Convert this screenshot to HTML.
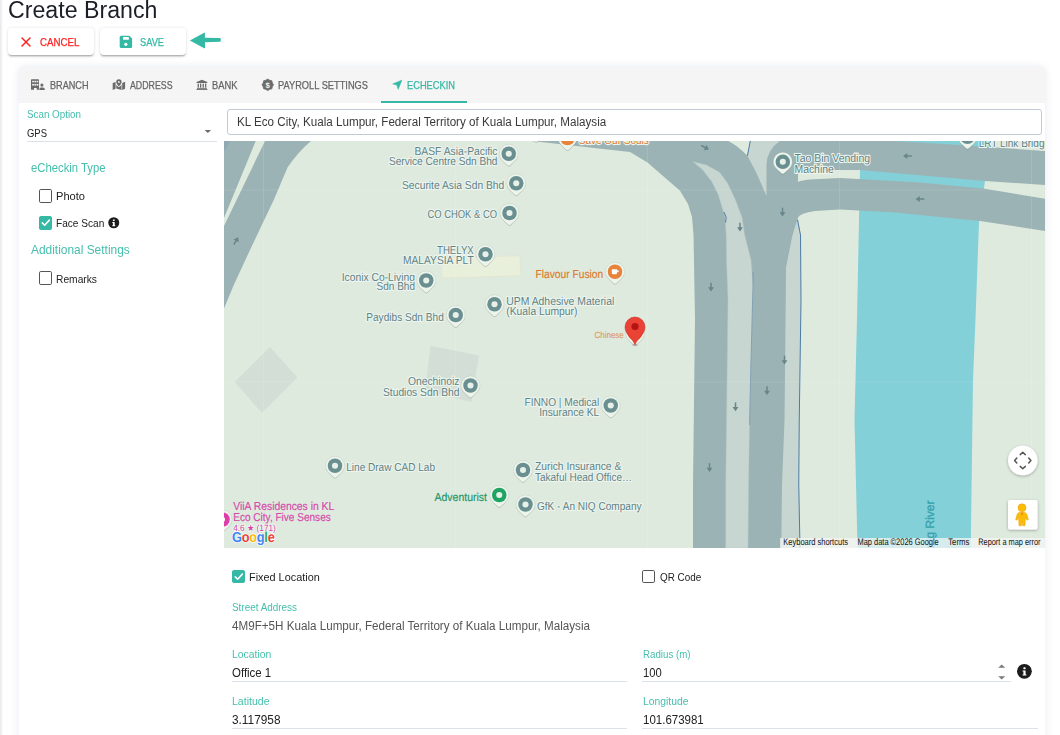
<!DOCTYPE html>
<html lang="en"><head><meta charset="utf-8"><title>Create Branch</title>
<style>
html,body{margin:0;padding:0}
body{width:1060px;height:735px;overflow:hidden;background:#fff;position:relative;font-family:"Liberation Sans", sans-serif}
.t{position:absolute;white-space:nowrap;line-height:1;transform-origin:0 0}
.abs{position:absolute}
.btn{position:absolute;top:28px;height:27px;width:86px;background:#fff;border-radius:4px;
 box-shadow:0 2px 1px -1.5px rgba(0,0,0,.16),0 1.5px 1.5px 0 rgba(0,0,0,.11),0 .75px 3.75px 0 rgba(0,0,0,.10)}
#card{position:absolute;left:18.8px;top:66.8px;width:1026px;height:690px;background:#fff;border-radius:4px 4px 0 0;
 box-shadow:0 0 7px 1px rgba(110,120,160,.13)}
#tabbar{position:absolute;left:18.8px;top:66.8px;width:1026.2px;height:36.1px;background:#f5f5f5;border-radius:4px 4px 0 0}
.ul{position:absolute;height:1px;background:#dde1ea}
.cb{position:absolute;width:11.4px;height:11.4px;border:.9px solid #555;border-radius:1.8px;background:#fff}
.cb.on{background:#35b8a4;border-color:#35b8a4}
</style></head><body>

<div class="abs" style="left:0;top:0;width:3px;height:735px;background:linear-gradient(to right,#e6e6ec,#fff)"></div>
<div id="card"></div><div id="tabbar"></div>
<div class="btn" style="left:8px"></div><div class="btn" style="left:100px"></div>
<!-- cancel X -->
<svg class="abs" style="left:20px;top:36px" width="12" height="12" viewBox="20 36 12 12"><path d="M22 38 L30 46 M30 38 L22 46" stroke="#ff2222" stroke-width="1.5" stroke-linecap="round" fill="none"/></svg>
<!-- save icon -->
<svg class="abs" style="left:119px;top:35px" width="14" height="14" viewBox="119 35 14 14"><path d="M121.2 35.7 H129.3 L132.1 38.5 V46.5 Q132.1 48 130.6 48 H121.2 Q119.7 48 119.7 46.5 V37.2 Q119.7 35.7 121.2 35.7 Z" fill="#35b8a4"/><rect x="123" y="37.1" width="5.9" height="2.6" rx=".4" fill="#fff"/><circle cx="125.8" cy="44.3" r="1.6" fill="#fff"/></svg>
<!-- arrow -->
<svg class="abs" style="left:188px;top:31px" width="34" height="19" viewBox="188 31 34 19"><path d="M189.9 40.6 L204.2 32.7 Q204.9 32.4 204.9 33.2 V37.8 L219.6 38.1 Q221 38.4 221 39.9 Q221 41.5 219.6 41.7 L205 42.3 V47.7 Q205 48.6 204.2 48.2 Z" fill="#35b8a4"/></svg>
<!-- tab icons -->
<svg class="abs" style="left:30px;top:78px" width="16" height="13" viewBox="30 78 16 13">
 <g fill="#6b6b6b">
 <path d="M31.8 79.2 H38.2 Q39 79.2 39 80 V89.85 H36.7 V87.9 H34 V89.85 H31 V80 Q31 79.2 31.8 79.2 Z"/>
 <circle cx="41.9" cy="85.1" r="1.55"/>
 <path d="M39.3 89.9 Q39.3 87.5 41 87.5 H42.9 Q44.9 87.5 44.9 89.9 Z"/>
 </g>
 <g fill="#f5f5f5"><rect x="32.2" y="80.8" width="1.7" height="1.5"/><rect x="34.4" y="80.8" width="1.8" height="1.5"/><rect x="36.7" y="80.8" width="1.6" height="1.5"/>
 <rect x="32.2" y="83.9" width="1.7" height="1.7"/><rect x="34.4" y="83.9" width="1.8" height="1.7"/><rect x="36.7" y="83.9" width="1.6" height="1.7"/></g>
</svg>
<svg class="abs" style="left:112px;top:78px" width="14" height="13" viewBox="112 78 14 13">
 <g fill="#6b6b6b">
 <path d="M112.7 83 L115.6 81.9 V88.8 L112.7 89.9 Z"/>
 <path d="M116.3 84.8 Q117.6 86.6 118.9 87.2 Q120.2 86.6 121.5 84.8 V89.9 L116.3 88.5 Z"/>
 <path d="M122.2 82.9 L125.1 81.8 V88.8 L122.2 89.9 Z"/>
 <path d="M118.9 79.3 Q121.6 79.3 121.6 82 Q121.6 83.6 118.9 86.5 Q116.2 83.6 116.2 82 Q116.2 79.3 118.9 79.3 Z"/>
 </g><circle cx="118.9" cy="82" r=".9" fill="#f5f5f5"/>
</svg>
<svg class="abs" style="left:196px;top:79px" width="12" height="12" viewBox="196 79 12 12">
 <g fill="#6b6b6b">
 <path d="M201.95 79.7 L207.3 82 V83 H196.6 V82 Z"/>
 <rect x="197.6" y="83.6" width="1.3" height="4"/><rect x="200" y="83.6" width="1.3" height="4"/><rect x="202.6" y="83.6" width="1.3" height="4"/><rect x="205" y="83.6" width="1.3" height="4"/>
 <rect x="197" y="87.9" width="9.9" height=".9"/><rect x="196.5" y="89" width="10.9" height=".9"/>
 </g>
</svg>
<svg class="abs" style="left:261px;top:78px" width="14" height="14" viewBox="261 78 14 14">
 <polygon points="267.75,79.05 269.64,80.23 271.82,80.73 272.32,82.91 273.50,84.80 272.32,86.69 271.82,88.87 269.64,89.37 267.75,90.55 265.86,89.37 263.68,88.87 263.18,86.69 262.00,84.80 263.18,82.91 263.68,80.73 265.86,80.23" fill="#6b6b6b" stroke="#6b6b6b" stroke-width=".8" stroke-linejoin="round"/>
 <text x="267.75" y="87.5" text-rendering="geometricPrecision" font-size="7.8" font-weight="700" fill="#f5f5f5" text-anchor="middle" font-family="Liberation Sans, sans-serif">$</text>
</svg>
<svg class="abs" style="left:392px;top:79px" width="11" height="11" viewBox="392 79 11 11"><path d="M401.8 80.2 L398.2 89.3 L396.9 85.1 L392.8 83.9 Z" fill="#35b8a4" stroke="#35b8a4" stroke-width=".6" stroke-linejoin="round"/></svg>
<!-- select caret -->
<svg class="abs" style="left:204px;top:129px" width="8" height="5" viewBox="0 0 8 5"><path d="M.6 .9 H7.1 L3.85 4.1 Z" fill="#6b6b6b"/></svg>
<!-- info icons -->
<svg class="abs" style="left:107.5px;top:217px" width="12" height="12" viewBox="0 0 12 12"><circle cx="5.75" cy="5.75" r="5.5" fill="#1c1c1c"/><rect x="4.9" y="2.4" width="1.8" height="1.6" rx=".3" fill="#fff"/><path d="M4.3 5 H6.7 V8.3 H7.3 V9.2 H4.3 V8.3 H4.9 V5.9 H4.3 Z" fill="#fff"/></svg>
<svg class="abs" style="left:1016px;top:663px" width="17" height="17" viewBox="0 0 17 17"><circle cx="8.4" cy="8.3" r="7.4" fill="#1c1c1c"/><rect x="7.4" y="4.3" width="2.2" height="1.9" rx=".4" fill="#fff"/><path d="M6.6 7.5 H9.6 V11.4 H10.4 V12.5 H6.6 V11.4 H7.4 V8.6 H6.6 Z" fill="#fff"/></svg>
<!-- number spinner -->
<svg class="abs" style="left:997px;top:663px" width="9" height="17" viewBox="997 663 9 17"><path d="M998.2 667.8 L1001.7 664.4 L1005.2 667.8 Z M998.2 676.2 L1001.7 679.6 L1005.2 676.2 Z" fill="#7a7a7a"/></svg>

<div class="abs" style="left:381px;top:100.5px;width:86px;height:2px;background:#35b8a4"></div>
<div class="ul" style="left:27px;top:141px;width:190px"></div>
<div class="abs" style="left:227px;top:109px;width:813px;height:23.7px;border:1px solid #c3cad6;border-radius:3px;background:#fff;box-sizing:content-box"></div>
<div class="ul" style="left:232px;top:681px;width:395px"></div>
<div class="ul" style="left:232px;top:728px;width:395px"></div>
<div class="ul" style="left:642px;top:681px;width:368.5px"></div>
<div class="ul" style="left:642px;top:728px;width:395.5px"></div>
<div class="cb" style="left:38.9px;top:189.3px"></div>
<div class="cb on" style="left:38.9px;top:216.3px"><svg width="11.4" height="11.4" viewBox="0 0 11 11" style="display:block"><path d="M2.2 5.7 L4.5 8 L9 3" fill="none" stroke="#fff" stroke-width="1.5" stroke-linecap="round" stroke-linejoin="round"/></svg></div>
<div class="cb" style="left:38.9px;top:271.2px"></div>
<div class="cb on" style="left:232px;top:570px"><svg width="11.4" height="11.4" viewBox="0 0 11 11" style="display:block"><path d="M2.2 5.7 L4.5 8 L9 3" fill="none" stroke="#fff" stroke-width="1.5" stroke-linecap="round" stroke-linejoin="round"/></svg></div>
<div class="cb" style="left:642px;top:570px"></div>
<svg class="abs" style="left:224px;top:141px" width="821" height="406.5" viewBox="224 141 821 406.5" font-family="Liberation Sans, sans-serif" text-rendering="geometricPrecision">
<rect x="224" y="141" width="821" height="407" fill="#dfeadf"/>
<path d="M862 135 L991 135 L985 181 L979 222.5 L975.5 319 L973 380 L970.75 548 L857.5 548 L854.5 420 L857 319 L860 170 Z" fill="#84d0d8"/>
<path d="M224 141 H311 Q298 152 287.5 167.5 L273.75 200 L250 250 L233.75 285 L224 308.5 Z" fill="#9bb3b5"/>
<path d="M255.75 141 H265 L224 226 V218 Z" fill="#dfeadf"/>
<path d="M224 141 H230 L224 152 Z" fill="#8fa9b3"/>
<path d="M775 215 L798 217 L800.5 235 L801 300 L799.25 420 L798.75 484 L800 548 L775 548 Z" fill="#c7d6d0"/>
<path d="M532 141 L630 152 L647.5 162.5 L680 190.8 L688 204 L692 217 L693.5 235 L695 319 L693 484 L693 548 L781.25 548 L782 484 L784.5 420 L785.75 300 L786 267.5 L792.5 235 L798 217.5 Q800 213 815 211 L840 209.5 L895 212.5 L980 221 L1045 231 L1045 198.75 L985 188.75 L920 182.5 L840 178 L810 179.5 Q800 180.5 798 182 L798 172.5 Q799 170 805 170 L860 170 L985 181 L1045 185 L1045 151 L960 145 L895 141 Z" fill="#9bb3b5"/>
<path d="M693.2 161.8 L706.4 165 L719.6 172.3 L727.5 183 L735.5 200 L742 217.3 L744.7 235 L751 260 L753 285 L752.6 300 L750.5 380 L749.4 430 L748.6 484 L748 548 L725.75 548 L725.75 484 L728 300 L726.5 260 L726.2 235 L725 217.3 L722.3 208 L718.3 194.8 L711.7 181.6 L702.5 169.7 Z" fill="#c7d6d0" stroke="#b4c6c4" stroke-width=".5"/>
<path d="M728.2 141 H750.3 L747.4 155.8 Q738 146 728.2 141 Z" fill="#dfeadf"/>
<path d="M750.3 141 H779.7 Q767 150 766.5 164.4 L766.5 196 L756 172 L747.4 155.8 Z" fill="#c7d6d0"/>
<path d="M750.3 141 L747.4 155.8" stroke="#4d7ba6" stroke-width="1" fill="none"/>
<path d="M797.5 220 L800.5 235 L801 300 L799.25 420 L798.75 484 L800 548" stroke="#4d7ba6" stroke-width="1" fill="none"/>
<path d="M723.8 212 L726.2 217.3 L725.6 222.5" stroke="#4d7ba6" stroke-width="1" fill="none"/>
<path d="M753 272 L753 285 L752.6 300 L750.5 380 L749.6 425" stroke="#5f86a8" stroke-width=".7" fill="none" opacity=".8"/>
<path d="M270 347 L297.5 377.5 L262 413 L234.5 382 Z" fill="#d3dfd6"/>
<path d="M430.5 345.75 L479 355.5 L471.5 402 L425 391 Z" fill="#d3dfd6"/>
<path d="M441.25 257.5 L520 255.75 L520.5 275.75 L441.75 278.25 Z" fill="#e8efda" stroke="#e2e3cd" stroke-width=".7"/>
<path d="M263.5 141 V548" stroke="#fff" stroke-opacity=".15" stroke-width=".75"/>
<path d="M455.5 141 V548" stroke="#fff" stroke-opacity=".15" stroke-width=".75"/>
<path d="M647.5 141 V548" stroke="#fff" stroke-opacity=".15" stroke-width=".75"/>
<path d="M839.5 141 V548" stroke="#fff" stroke-opacity=".15" stroke-width=".75"/>
<path d="M1031.5 141 V548" stroke="#fff" stroke-opacity=".15" stroke-width=".75"/>
<path d="M224 190 H1045" stroke="#fff" stroke-opacity=".15" stroke-width=".75"/>
<path d="M224 382 H1045" stroke="#fff" stroke-opacity=".15" stroke-width=".75"/>
<g transform="translate(782.5 212) rotate(0)" stroke="#67858a" stroke-width="1.5" fill="#67858a"><path d="M0 -4.3 V1.5" fill="none"/><path d="M-2.9 .2 L0 4.4 L2.9 .2 Z" stroke="none"/></g>
<g transform="translate(740 227) rotate(0)" stroke="#67858a" stroke-width="1.5" fill="#67858a"><path d="M0 -4.3 V1.5" fill="none"/><path d="M-2.9 .2 L0 4.4 L2.9 .2 Z" stroke="none"/></g>
<g transform="translate(711 287) rotate(0)" stroke="#67858a" stroke-width="1.5" fill="#67858a"><path d="M0 -4.3 V1.5" fill="none"/><path d="M-2.9 .2 L0 4.4 L2.9 .2 Z" stroke="none"/></g>
<g transform="translate(784.5 360) rotate(0)" stroke="#67858a" stroke-width="1.5" fill="#67858a"><path d="M0 -4.3 V1.5" fill="none"/><path d="M-2.9 .2 L0 4.4 L2.9 .2 Z" stroke="none"/></g>
<g transform="translate(767 390.5) rotate(0)" stroke="#67858a" stroke-width="1.5" fill="#67858a"><path d="M0 -4.3 V1.5" fill="none"/><path d="M-2.9 .2 L0 4.4 L2.9 .2 Z" stroke="none"/></g>
<g transform="translate(735.5 406.75) rotate(0)" stroke="#67858a" stroke-width="1.5" fill="#67858a"><path d="M0 -4.3 V1.5" fill="none"/><path d="M-2.9 .2 L0 4.4 L2.9 .2 Z" stroke="none"/></g>
<g transform="translate(709.5 467.5) rotate(0)" stroke="#67858a" stroke-width="1.5" fill="#67858a"><path d="M0 -4.3 V1.5" fill="none"/><path d="M-2.9 .2 L0 4.4 L2.9 .2 Z" stroke="none"/></g>
<g transform="translate(907.5 156) rotate(90)" stroke="#67858a" stroke-width="1.5" fill="#67858a"><path d="M0 -4.3 V1.5" fill="none"/><path d="M-2.9 .2 L0 4.4 L2.9 .2 Z" stroke="none"/></g>
<g transform="translate(920 199) rotate(90)" stroke="#67858a" stroke-width="1.5" fill="#67858a"><path d="M0 -4.3 V1.5" fill="none"/><path d="M-2.9 .2 L0 4.4 L2.9 .2 Z" stroke="none"/></g>
<g transform="translate(705 147.5) rotate(-62)" stroke="#67858a" stroke-width="1.5" fill="#67858a"><path d="M0 -4.3 V1.5" fill="none"/><path d="M-2.9 .2 L0 4.4 L2.9 .2 Z" stroke="none"/></g>
<g transform="translate(236 241) rotate(-150)" stroke="#67858a" stroke-width="1.5" fill="#67858a"><path d="M0 -4.3 V1.5" fill="none"/><path d="M-2.9 .2 L0 4.4 L2.9 .2 Z" stroke="none"/></g>
<text transform="translate(934.2 500.5) rotate(-90)" text-anchor="end" font-size="12" fill="#37a2ae" stroke="#37a2ae" stroke-width=".35" x="0" y="0">Klang River</text>
<g transform="translate(508.75 153.75)"><path d="M9.3 2 Q9 5 5.6 8.2 L1.2 12.4 Q0 13.3 -1.2 12.4 L-5.6 8.2 Q-9 5 -9.3 2 Z" fill="#3c4a46" fill-opacity=".22"/><path d="M0 -9.5 A9.5 9.5 0 0 1 9.5 0 Q9.5 4.4 5.6 7.7 L1.2 11.8 Q0 12.7 -1.2 11.8 L-5.6 7.7 Q-9.5 4.4 -9.5 0 A9.5 9.5 0 0 1 0 -9.5 Z" fill="#ecf4ec" stroke="#7d8f88" stroke-opacity=".28" stroke-width=".6"/><circle r="7.25" fill="#6a8f90"/><circle r="3.05" fill="#e8f1e9"/></g>
<g transform="translate(516.25 183.25)"><path d="M9.3 2 Q9 5 5.6 8.2 L1.2 12.4 Q0 13.3 -1.2 12.4 L-5.6 8.2 Q-9 5 -9.3 2 Z" fill="#3c4a46" fill-opacity=".22"/><path d="M0 -9.5 A9.5 9.5 0 0 1 9.5 0 Q9.5 4.4 5.6 7.7 L1.2 11.8 Q0 12.7 -1.2 11.8 L-5.6 7.7 Q-9.5 4.4 -9.5 0 A9.5 9.5 0 0 1 0 -9.5 Z" fill="#ecf4ec" stroke="#7d8f88" stroke-opacity=".28" stroke-width=".6"/><circle r="7.25" fill="#6a8f90"/><circle r="3.05" fill="#e8f1e9"/></g>
<g transform="translate(509.5 213)"><path d="M9.3 2 Q9 5 5.6 8.2 L1.2 12.4 Q0 13.3 -1.2 12.4 L-5.6 8.2 Q-9 5 -9.3 2 Z" fill="#3c4a46" fill-opacity=".22"/><path d="M0 -9.5 A9.5 9.5 0 0 1 9.5 0 Q9.5 4.4 5.6 7.7 L1.2 11.8 Q0 12.7 -1.2 11.8 L-5.6 7.7 Q-9.5 4.4 -9.5 0 A9.5 9.5 0 0 1 0 -9.5 Z" fill="#ecf4ec" stroke="#7d8f88" stroke-opacity=".28" stroke-width=".6"/><circle r="7.25" fill="#6a8f90"/><circle r="3.05" fill="#e8f1e9"/></g>
<g transform="translate(485.5 254.25)"><path d="M9.3 2 Q9 5 5.6 8.2 L1.2 12.4 Q0 13.3 -1.2 12.4 L-5.6 8.2 Q-9 5 -9.3 2 Z" fill="#3c4a46" fill-opacity=".22"/><path d="M0 -9.5 A9.5 9.5 0 0 1 9.5 0 Q9.5 4.4 5.6 7.7 L1.2 11.8 Q0 12.7 -1.2 11.8 L-5.6 7.7 Q-9.5 4.4 -9.5 0 A9.5 9.5 0 0 1 0 -9.5 Z" fill="#ecf4ec" stroke="#7d8f88" stroke-opacity=".28" stroke-width=".6"/><circle r="7.25" fill="#6a8f90"/><circle r="3.05" fill="#e8f1e9"/></g>
<g transform="translate(426.25 280.5)"><path d="M9.3 2 Q9 5 5.6 8.2 L1.2 12.4 Q0 13.3 -1.2 12.4 L-5.6 8.2 Q-9 5 -9.3 2 Z" fill="#3c4a46" fill-opacity=".22"/><path d="M0 -9.5 A9.5 9.5 0 0 1 9.5 0 Q9.5 4.4 5.6 7.7 L1.2 11.8 Q0 12.7 -1.2 11.8 L-5.6 7.7 Q-9.5 4.4 -9.5 0 A9.5 9.5 0 0 1 0 -9.5 Z" fill="#ecf4ec" stroke="#7d8f88" stroke-opacity=".28" stroke-width=".6"/><circle r="7.25" fill="#6a8f90"/><circle r="3.05" fill="#e8f1e9"/></g>
<g transform="translate(494.5 304.25)"><path d="M9.3 2 Q9 5 5.6 8.2 L1.2 12.4 Q0 13.3 -1.2 12.4 L-5.6 8.2 Q-9 5 -9.3 2 Z" fill="#3c4a46" fill-opacity=".22"/><path d="M0 -9.5 A9.5 9.5 0 0 1 9.5 0 Q9.5 4.4 5.6 7.7 L1.2 11.8 Q0 12.7 -1.2 11.8 L-5.6 7.7 Q-9.5 4.4 -9.5 0 A9.5 9.5 0 0 1 0 -9.5 Z" fill="#ecf4ec" stroke="#7d8f88" stroke-opacity=".28" stroke-width=".6"/><circle r="7.25" fill="#6a8f90"/><circle r="3.05" fill="#e8f1e9"/></g>
<g transform="translate(455.75 315)"><path d="M9.3 2 Q9 5 5.6 8.2 L1.2 12.4 Q0 13.3 -1.2 12.4 L-5.6 8.2 Q-9 5 -9.3 2 Z" fill="#3c4a46" fill-opacity=".22"/><path d="M0 -9.5 A9.5 9.5 0 0 1 9.5 0 Q9.5 4.4 5.6 7.7 L1.2 11.8 Q0 12.7 -1.2 11.8 L-5.6 7.7 Q-9.5 4.4 -9.5 0 A9.5 9.5 0 0 1 0 -9.5 Z" fill="#ecf4ec" stroke="#7d8f88" stroke-opacity=".28" stroke-width=".6"/><circle r="7.25" fill="#6a8f90"/><circle r="3.05" fill="#e8f1e9"/></g>
<g transform="translate(470.5 385.5)"><path d="M9.3 2 Q9 5 5.6 8.2 L1.2 12.4 Q0 13.3 -1.2 12.4 L-5.6 8.2 Q-9 5 -9.3 2 Z" fill="#3c4a46" fill-opacity=".22"/><path d="M0 -9.5 A9.5 9.5 0 0 1 9.5 0 Q9.5 4.4 5.6 7.7 L1.2 11.8 Q0 12.7 -1.2 11.8 L-5.6 7.7 Q-9.5 4.4 -9.5 0 A9.5 9.5 0 0 1 0 -9.5 Z" fill="#ecf4ec" stroke="#7d8f88" stroke-opacity=".28" stroke-width=".6"/><circle r="7.25" fill="#6a8f90"/><circle r="3.05" fill="#e8f1e9"/></g>
<g transform="translate(610.75 405.5)"><path d="M9.3 2 Q9 5 5.6 8.2 L1.2 12.4 Q0 13.3 -1.2 12.4 L-5.6 8.2 Q-9 5 -9.3 2 Z" fill="#3c4a46" fill-opacity=".22"/><path d="M0 -9.5 A9.5 9.5 0 0 1 9.5 0 Q9.5 4.4 5.6 7.7 L1.2 11.8 Q0 12.7 -1.2 11.8 L-5.6 7.7 Q-9.5 4.4 -9.5 0 A9.5 9.5 0 0 1 0 -9.5 Z" fill="#ecf4ec" stroke="#7d8f88" stroke-opacity=".28" stroke-width=".6"/><circle r="7.25" fill="#6a8f90"/><circle r="3.05" fill="#e8f1e9"/></g>
<g transform="translate(335 465.75)"><path d="M9.3 2 Q9 5 5.6 8.2 L1.2 12.4 Q0 13.3 -1.2 12.4 L-5.6 8.2 Q-9 5 -9.3 2 Z" fill="#3c4a46" fill-opacity=".22"/><path d="M0 -9.5 A9.5 9.5 0 0 1 9.5 0 Q9.5 4.4 5.6 7.7 L1.2 11.8 Q0 12.7 -1.2 11.8 L-5.6 7.7 Q-9.5 4.4 -9.5 0 A9.5 9.5 0 0 1 0 -9.5 Z" fill="#ecf4ec" stroke="#7d8f88" stroke-opacity=".28" stroke-width=".6"/><circle r="7.25" fill="#6a8f90"/><circle r="3.05" fill="#e8f1e9"/></g>
<g transform="translate(523 470)"><path d="M9.3 2 Q9 5 5.6 8.2 L1.2 12.4 Q0 13.3 -1.2 12.4 L-5.6 8.2 Q-9 5 -9.3 2 Z" fill="#3c4a46" fill-opacity=".22"/><path d="M0 -9.5 A9.5 9.5 0 0 1 9.5 0 Q9.5 4.4 5.6 7.7 L1.2 11.8 Q0 12.7 -1.2 11.8 L-5.6 7.7 Q-9.5 4.4 -9.5 0 A9.5 9.5 0 0 1 0 -9.5 Z" fill="#ecf4ec" stroke="#7d8f88" stroke-opacity=".28" stroke-width=".6"/><circle r="7.25" fill="#6a8f90"/><circle r="3.05" fill="#e8f1e9"/></g>
<g transform="translate(525.5 504.5)"><path d="M9.3 2 Q9 5 5.6 8.2 L1.2 12.4 Q0 13.3 -1.2 12.4 L-5.6 8.2 Q-9 5 -9.3 2 Z" fill="#3c4a46" fill-opacity=".22"/><path d="M0 -9.5 A9.5 9.5 0 0 1 9.5 0 Q9.5 4.4 5.6 7.7 L1.2 11.8 Q0 12.7 -1.2 11.8 L-5.6 7.7 Q-9.5 4.4 -9.5 0 A9.5 9.5 0 0 1 0 -9.5 Z" fill="#ecf4ec" stroke="#7d8f88" stroke-opacity=".28" stroke-width=".6"/><circle r="7.25" fill="#6a8f90"/><circle r="3.05" fill="#e8f1e9"/></g>
<g transform="translate(782.8 161.8)"><path d="M9.3 2 Q9 5 5.6 8.2 L1.2 12.4 Q0 13.3 -1.2 12.4 L-5.6 8.2 Q-9 5 -9.3 2 Z" fill="#3c4a46" fill-opacity=".22"/><path d="M0 -9.5 A9.5 9.5 0 0 1 9.5 0 Q9.5 4.4 5.6 7.7 L1.2 11.8 Q0 12.7 -1.2 11.8 L-5.6 7.7 Q-9.5 4.4 -9.5 0 A9.5 9.5 0 0 1 0 -9.5 Z" fill="#ecf4ec" stroke="#7d8f88" stroke-opacity=".28" stroke-width=".6"/><circle r="7.25" fill="#6a8f90"/><circle r="3.05" fill="#e8f1e9"/></g>
<g transform="translate(967.5 136.8)"><path d="M9.3 2 Q9 5 5.6 8.2 L1.2 12.4 Q0 13.3 -1.2 12.4 L-5.6 8.2 Q-9 5 -9.3 2 Z" fill="#3c4a46" fill-opacity=".22"/><path d="M0 -9.5 A9.5 9.5 0 0 1 9.5 0 Q9.5 4.4 5.6 7.7 L1.2 11.8 Q0 12.7 -1.2 11.8 L-5.6 7.7 Q-9.5 4.4 -9.5 0 A9.5 9.5 0 0 1 0 -9.5 Z" fill="#ecf4ec" stroke="#7d8f88" stroke-opacity=".28" stroke-width=".6"/><circle r="7.25" fill="#6a8f90"/><circle r="3.05" fill="#e8f1e9"/></g>
<g transform="translate(499.25 495)"><path d="M9.3 2 Q9 5 5.6 8.2 L1.2 12.4 Q0 13.3 -1.2 12.4 L-5.6 8.2 Q-9 5 -9.3 2 Z" fill="#3c4a46" fill-opacity=".22"/><path d="M0 -9.5 A9.5 9.5 0 0 1 9.5 0 Q9.5 4.4 5.6 7.7 L1.2 11.8 Q0 12.7 -1.2 11.8 L-5.6 7.7 Q-9.5 4.4 -9.5 0 A9.5 9.5 0 0 1 0 -9.5 Z" fill="#ecf4ec" stroke="#7d8f88" stroke-opacity=".28" stroke-width=".6"/><circle r="7.25" fill="#1ea362"/><circle r="3.05" fill="#e8f1e9"/></g>
<g transform="translate(536 130)"><path d="M9.3 2 Q9 5 5.6 8.2 L1.2 12.4 Q0 13.3 -1.2 12.4 L-5.6 8.2 Q-9 5 -9.3 2 Z" fill="#3c4a46" fill-opacity=".22"/><path d="M0 -9.5 A9.5 9.5 0 0 1 9.5 0 Q9.5 4.4 5.6 7.7 L1.2 11.8 Q0 12.7 -1.2 11.8 L-5.6 7.7 Q-9.5 4.4 -9.5 0 A9.5 9.5 0 0 1 0 -9.5 Z" fill="#ecf4ec" stroke="#7d8f88" stroke-opacity=".28" stroke-width=".6"/><circle r="7.25" fill="#6a8f90"/><circle r="3.05" fill="#e8f1e9"/></g>
<g transform="translate(615 271.75)"><path d="M9.3 2 Q9 5 5.6 8.2 L1.2 12.4 Q0 13.3 -1.2 12.4 L-5.6 8.2 Q-9 5 -9.3 2 Z" fill="#3c4a46" fill-opacity=".22"/><path d="M0 -9.5 A9.5 9.5 0 0 1 9.5 0 Q9.5 4.4 5.6 7.7 L1.2 11.8 Q0 12.7 -1.2 11.8 L-5.6 7.7 Q-9.5 4.4 -9.5 0 A9.5 9.5 0 0 1 0 -9.5 Z" fill="#ecf4ec" stroke="#7d8f88" stroke-opacity=".28" stroke-width=".6"/><circle r="7.25" fill="#e8833a"/><path d="M-3.2 -2.4 H2 V1.2 Q2 2.4 .8 2.4 H-2 Q-3.2 2.4 -3.2 1.2 Z M2 -1.6 H3.1 Q3.7 -1.6 3.7 -.9 V-.2 Q3.7 .5 3.1 .5 H2 Z" fill="#fff"/></g>
<g transform="translate(567.5 138)"><path d="M9.3 2 Q9 5 5.6 8.2 L1.2 12.4 Q0 13.3 -1.2 12.4 L-5.6 8.2 Q-9 5 -9.3 2 Z" fill="#3c4a46" fill-opacity=".22"/><path d="M0 -9.5 A9.5 9.5 0 0 1 9.5 0 Q9.5 4.4 5.6 7.7 L1.2 11.8 Q0 12.7 -1.2 11.8 L-5.6 7.7 Q-9.5 4.4 -9.5 0 A9.5 9.5 0 0 1 0 -9.5 Z" fill="#ecf4ec" stroke="#7d8f88" stroke-opacity=".28" stroke-width=".6"/><circle r="7.25" fill="#e8833a"/><circle r="2.5" fill="#fff"/></g>
<g transform="translate(222.5 519.5)"><path d="M9.3 2 Q9 5 5.6 8.2 L1.2 12.4 Q0 13.3 -1.2 12.4 L-5.6 8.2 Q-9 5 -9.3 2 Z" fill="#3c4a46" fill-opacity=".22"/><path d="M0 -9.5 A9.5 9.5 0 0 1 9.5 0 Q9.5 4.4 5.6 7.7 L1.2 11.8 Q0 12.7 -1.2 11.8 L-5.6 7.7 Q-9.5 4.4 -9.5 0 A9.5 9.5 0 0 1 0 -9.5 Z" fill="#ecf4ec" stroke="#7d8f88" stroke-opacity=".28" stroke-width=".6"/><circle r="7.25" fill="#dd3fa8"/><circle r="2.5" fill="#fff"/></g>
<g transform="translate(635 333.2)"><path d="M9.3 2 Q9 5 5.6 8.2 L1.2 12.4 Q0 13.3 -1.2 12.4 L-5.6 8.2 Q-9 5 -9.3 2 Z" fill="#3c4a46" fill-opacity=".22"/><path d="M0 -9.5 A9.5 9.5 0 0 1 9.5 0 Q9.5 4.4 5.6 7.7 L1.2 11.8 Q0 12.7 -1.2 11.8 L-5.6 7.7 Q-9.5 4.4 -9.5 0 A9.5 9.5 0 0 1 0 -9.5 Z" fill="#ecf4ec" stroke="#7d8f88" stroke-opacity=".28" stroke-width=".6"/><circle r="7.25" fill="#e8833a"/></g>
<text x="414.5" y="154.5" font-size="11.5" fill="#5f8385" font-weight="400" stroke="#eef5ee" stroke-width="2.2" stroke-linejoin="round" paint-order="stroke" textLength="83.00" lengthAdjust="spacingAndGlyphs">BASF Asia-Pacific</text>
<text x="389" y="164.5" font-size="11.5" fill="#5f8385" font-weight="400" stroke="#eef5ee" stroke-width="2.2" stroke-linejoin="round" paint-order="stroke" textLength="108.50" lengthAdjust="spacingAndGlyphs">Service Centre Sdn Bhd</text>
<text x="402" y="188.75" font-size="11.5" fill="#5f8385" font-weight="400" stroke="#eef5ee" stroke-width="2.2" stroke-linejoin="round" paint-order="stroke" textLength="102.25" lengthAdjust="spacingAndGlyphs">Securite Asia Sdn Bhd</text>
<text x="427.5" y="218" font-size="11.5" fill="#5f8385" font-weight="400" stroke="#eef5ee" stroke-width="2.2" stroke-linejoin="round" paint-order="stroke" textLength="69.50" lengthAdjust="spacingAndGlyphs">CO CHOK &amp; CO</text>
<text x="437" y="254.25" font-size="11.5" fill="#5f8385" font-weight="400" stroke="#eef5ee" stroke-width="2.2" stroke-linejoin="round" paint-order="stroke" textLength="36.75" lengthAdjust="spacingAndGlyphs">THELYX</text>
<text x="403" y="264.25" font-size="11.5" fill="#5f8385" font-weight="400" stroke="#eef5ee" stroke-width="2.2" stroke-linejoin="round" paint-order="stroke" textLength="70.75" lengthAdjust="spacingAndGlyphs">MALAYSIA PLT</text>
<text x="341.75" y="280.75" font-size="11.5" fill="#5f8385" font-weight="400" stroke="#eef5ee" stroke-width="2.2" stroke-linejoin="round" paint-order="stroke" textLength="73.25" lengthAdjust="spacingAndGlyphs">Iconix Co-Living</text>
<text x="376.5" y="290" font-size="11.5" fill="#5f8385" font-weight="400" stroke="#eef5ee" stroke-width="2.2" stroke-linejoin="round" paint-order="stroke" textLength="38.50" lengthAdjust="spacingAndGlyphs">Sdn Bhd</text>
<text x="506.25" y="305" font-size="11.5" fill="#5f8385" font-weight="400" stroke="#eef5ee" stroke-width="2.2" stroke-linejoin="round" paint-order="stroke" textLength="108.00" lengthAdjust="spacingAndGlyphs">UPM Adhesive Material</text>
<text x="506.25" y="314.5" font-size="11.5" fill="#5f8385" font-weight="400" stroke="#eef5ee" stroke-width="2.2" stroke-linejoin="round" paint-order="stroke" textLength="71.25" lengthAdjust="spacingAndGlyphs">(Kuala Lumpur)</text>
<text x="366.25" y="321" font-size="11.5" fill="#5f8385" font-weight="400" stroke="#eef5ee" stroke-width="2.2" stroke-linejoin="round" paint-order="stroke" textLength="77.50" lengthAdjust="spacingAndGlyphs">Paydibs Sdn Bhd</text>
<text x="408" y="385" font-size="11.5" fill="#5f8385" font-weight="400" stroke="#eef5ee" stroke-width="2.2" stroke-linejoin="round" paint-order="stroke" textLength="51.50" lengthAdjust="spacingAndGlyphs">Onechinoiz</text>
<text x="383" y="395.75" font-size="11.5" fill="#5f8385" font-weight="400" stroke="#eef5ee" stroke-width="2.2" stroke-linejoin="round" paint-order="stroke" textLength="76.50" lengthAdjust="spacingAndGlyphs">Studios Sdn Bhd</text>
<text x="524.5" y="405.5" font-size="11.5" fill="#5f8385" font-weight="400" stroke="#eef5ee" stroke-width="2.2" stroke-linejoin="round" paint-order="stroke" textLength="74.75" lengthAdjust="spacingAndGlyphs">FINNO | Medical</text>
<text x="539.25" y="416.25" font-size="11.5" fill="#5f8385" font-weight="400" stroke="#eef5ee" stroke-width="2.2" stroke-linejoin="round" paint-order="stroke" textLength="60.00" lengthAdjust="spacingAndGlyphs">Insurance KL</text>
<text x="346.25" y="470.75" font-size="11.5" fill="#5f8385" font-weight="400" stroke="#eef5ee" stroke-width="2.2" stroke-linejoin="round" paint-order="stroke" textLength="88.75" lengthAdjust="spacingAndGlyphs">Line Draw CAD Lab</text>
<text x="535" y="470" font-size="11.5" fill="#5f8385" font-weight="400" stroke="#eef5ee" stroke-width="2.2" stroke-linejoin="round" paint-order="stroke" textLength="86.25" lengthAdjust="spacingAndGlyphs">Zurich Insurance &amp;</text>
<text x="535" y="480.5" font-size="11.5" fill="#5f8385" font-weight="400" stroke="#eef5ee" stroke-width="2.2" stroke-linejoin="round" paint-order="stroke" textLength="97.00" lengthAdjust="spacingAndGlyphs">Takaful Head Office…</text>
<text x="537" y="509.5" font-size="11.5" fill="#5f8385" font-weight="400" stroke="#eef5ee" stroke-width="2.2" stroke-linejoin="round" paint-order="stroke" textLength="104.50" lengthAdjust="spacingAndGlyphs">GfK - An NIQ Company</text>
<text x="794.5" y="162" font-size="11.5" fill="#5f8385" font-weight="400" stroke="#eef5ee" stroke-width="2.2" stroke-linejoin="round" paint-order="stroke" textLength="75.50" lengthAdjust="spacingAndGlyphs">Tao Bin Vending</text>
<text x="794.5" y="172.5" font-size="11.5" fill="#5f8385" font-weight="400" stroke="#eef5ee" stroke-width="2.2" stroke-linejoin="round" paint-order="stroke" textLength="39.25" lengthAdjust="spacingAndGlyphs">Machine</text>
<text x="978.75" y="147" font-size="11.5" fill="#5f8385" font-weight="400" stroke="#eef5ee" stroke-width="2.2" stroke-linejoin="round" paint-order="stroke" textLength="71.25" lengthAdjust="spacingAndGlyphs">LRT Link Bridge</text>
<text x="535.5" y="277.5" font-size="11.5" fill="#dd7a2c" stroke="#dd7a2c" stroke-width=".15" textLength="67.75" lengthAdjust="spacingAndGlyphs">Flavour Fusion</text>
<text x="578.75" y="144.2" font-size="11.5" fill="#dd7a2c" font-weight="400" stroke="#eef5ee" stroke-width="2.2" stroke-linejoin="round" paint-order="stroke" textLength="70.00" lengthAdjust="spacingAndGlyphs">Save Our Souls</text>
<text x="594.5" y="338.3" font-size="9" fill="#dd9a62" stroke="#dd9a62" stroke-width=".15" textLength="29.25" lengthAdjust="spacingAndGlyphs">Chinese</text>
<text x="434.5" y="500.5" font-size="11.5" fill="#1d9567" stroke="#1d9567" stroke-width=".15" textLength="52.50" lengthAdjust="spacingAndGlyphs">Adventurist</text>
<text x="233.25" y="510" font-size="11.5" fill="#d648aa" stroke="#d648aa" stroke-width=".15" textLength="101.00" lengthAdjust="spacingAndGlyphs">ViiA Residences in KL</text>
<text x="233.25" y="520.5" font-size="11.5" fill="#d648aa" stroke="#d648aa" stroke-width=".15" textLength="97.50" lengthAdjust="spacingAndGlyphs">Eco City, Five Senses</text>
<text x="233.25" y="530.5" font-size="9" fill="#d648aa" font-weight="400" stroke="#eef5ee" stroke-width="2.2" stroke-linejoin="round" paint-order="stroke" textLength="42.50" lengthAdjust="spacingAndGlyphs">4.6 ★ (171)</text>
<g transform="translate(635 345)"><ellipse cx="0" cy="0" rx="3" ry="1.2" fill="#000" opacity=".15"/><path d="M0 0 C-1.5 -6 -10 -10 -10 -18 A10 10 0 0 1 10 -18 C10 -10 1.5 -6 0 0 Z" fill="#ea4335" stroke="#c5221f" stroke-width=".5"/><circle cx="0" cy="-18.5" r="3.6" fill="#b31412"/></g>
<text x="232" y="541.8" font-size="14.5" font-weight="700" stroke="#fff" stroke-width="1.2" paint-order="stroke" stroke-linejoin="round" textLength="42.5" lengthAdjust="spacingAndGlyphs" letter-spacing="-.3"><tspan fill="#4285f4">G</tspan><tspan fill="#ea4335">o</tspan><tspan fill="#fbbc05">o</tspan><tspan fill="#4285f4">g</tspan><tspan fill="#34a853">l</tspan><tspan fill="#ea4335">e</tspan></text>
<rect x="780" y="538" width="265" height="10" fill="#f5f7f5" fill-opacity=".72"/>
<text x="783.25" y="545" font-size="9.5" fill="#111" textLength="64.75" lengthAdjust="spacingAndGlyphs">Keyboard shortcuts</text>
<text x="857.5" y="545" font-size="9.5" fill="#111" textLength="81.25" lengthAdjust="spacingAndGlyphs">Map data ©2026 Google</text>
<text x="948.25" y="545" font-size="9.5" fill="#111" textLength="21.00" lengthAdjust="spacingAndGlyphs">Terms</text>
<text x="978.25" y="545" font-size="9.5" fill="#111" textLength="62.25" lengthAdjust="spacingAndGlyphs">Report a map error</text>
<filter id="sh" x="-30%" y="-30%" width="160%" height="170%"><feDropShadow dx="0" dy="1" stdDeviation="1.4" flood-color="#000" flood-opacity=".3"/></filter>
<circle cx="1022.75" cy="460.5" r="14.75" fill="#fff" filter="url(#sh)"/>
<g stroke="#555" stroke-width="1.5" fill="none" stroke-linecap="round" stroke-linejoin="round"><path d="M1020.2 454.6 L1022.75 452.3 L1025.3 454.6"/><path d="M1020.2 466.4 L1022.75 468.7 L1025.3 466.4"/><path d="M1016.8 458 L1014.6 460.5 L1016.8 463"/><path d="M1028.7 458 L1030.9 460.5 L1028.7 463"/></g>
<rect x="1008" y="500" width="29.5" height="29.5" rx="2" fill="#fff" filter="url(#sh)"/>
<g fill="#fbbc04" stroke="#e8a317" stroke-width=".5"><circle cx="1022" cy="507.8" r="4"/><path d="M1018.6 512.7 Q1022 511.6 1025.4 512.7 Q1026.6 513.2 1026.9 514.6 L1028.4 519.6 L1026.9 520.2 L1025.6 517 L1025.3 520.6 L1025 525.8 H1022.6 L1022 521 L1021.4 525.8 H1019 L1018.7 520.6 L1018.4 517 L1017.1 520.2 L1015.6 519.6 L1017.1 514.6 Q1017.4 513.2 1018.6 512.7 Z"/></g><path d="M1020.3 512.4 L1022 516 L1023.7 512.4" fill="#e8710a" fill-opacity=".55" stroke="none"/>
</svg>
<div class="t" id="t_title" style="left:7.8px;top:-0.87px;font-size:23px;color:#1d1f27;font-weight:400;transform:scaleX(1.0073)">Create Branch</div>
<div class="t" id="t_cancel" style="left:39.6px;top:37.31px;font-size:10.5px;color:#ff2222;font-weight:400;-webkit-text-stroke:.25px currentColor;transform:scaleX(0.9247)">CANCEL</div>
<div class="t" id="t_save" style="left:139.5px;top:37.31px;font-size:10.5px;color:#35b8a4;font-weight:400;-webkit-text-stroke:.25px currentColor;transform:scaleX(0.8812)">SAVE</div>
<div class="t" id="t_tab1" style="left:49.5px;top:80.77px;font-size:10.2px;color:#666;font-weight:400;-webkit-text-stroke:.25px currentColor;transform:scaleX(0.8947)">BRANCH</div>
<div class="t" id="t_tab2" style="left:129.5px;top:80.77px;font-size:10.2px;color:#666;font-weight:400;-webkit-text-stroke:.25px currentColor;transform:scaleX(0.8627)">ADDRESS</div>
<div class="t" id="t_tab3" style="left:212px;top:80.77px;font-size:10.2px;color:#666;font-weight:400;-webkit-text-stroke:.25px currentColor;transform:scaleX(0.9189)">BANK</div>
<div class="t" id="t_tab4" style="left:278px;top:80.77px;font-size:10.2px;color:#666;font-weight:400;-webkit-text-stroke:.25px currentColor;transform:scaleX(0.9101)">PAYROLL SETTINGS</div>
<div class="t" id="t_tab5" style="left:407px;top:80.77px;font-size:10.2px;color:#35b8a4;font-weight:400;-webkit-text-stroke:.25px currentColor;transform:scaleX(0.9116)">ECHECKIN</div>
<div class="t" id="t_scanl" style="left:27px;top:109.63px;font-size:10px;color:#45bfad;font-weight:400;transform:scaleX(0.9810)">Scan Option</div>
<div class="t" id="t_gps" style="left:27px;top:127.62px;font-size:11.5px;color:#222;font-weight:400;transform:scaleX(0.8232)">GPS</div>
<div class="t" id="t_search" style="left:236.8px;top:116.04px;font-size:12px;color:#3a3a3a;font-weight:400;transform:scaleX(0.9700)">KL Eco City, Kuala Lumpur, Federal Territory of Kuala Lumpur, Malaysia</div>
<div class="t" id="t_ect" style="left:30.75px;top:161.10px;font-size:13px;color:#45bfad;font-weight:400;transform:scaleX(0.8686)">eCheckin Type</div>
<div class="t" id="t_photo" style="left:56px;top:190.87px;font-size:11.5px;color:#222;font-weight:400;transform:scaleX(0.9647)">Photo</div>
<div class="t" id="t_face" style="left:56px;top:217.62px;font-size:11.5px;color:#222;font-weight:400;transform:scaleX(0.8775)">Face Scan</div>
<div class="t" id="t_add" style="left:30.75px;top:242.85px;font-size:13px;color:#45bfad;font-weight:400;transform:scaleX(0.9170)">Additional Settings</div>
<div class="t" id="t_rem" style="left:56px;top:273.97px;font-size:11.5px;color:#222;font-weight:400;transform:scaleX(0.8910)">Remarks</div>
<div class="t" id="t_fixed" style="left:249.25px;top:571.87px;font-size:11.5px;color:#222;font-weight:400;transform:scaleX(0.9459)">Fixed Location</div>
<div class="t" id="t_qr" style="left:659.5px;top:571.87px;font-size:11.5px;color:#222;font-weight:400;transform:scaleX(0.8605)">QR Code</div>
<div class="t" id="t_sal" style="left:232px;top:603.13px;font-size:10px;color:#45bfad;font-weight:400;transform:scaleX(0.9909)">Street Address</div>
<div class="t" id="t_sa" style="left:232px;top:619.69px;font-size:12px;color:#555;font-weight:400;transform:scaleX(0.9703)">4M9F+5H Kuala Lumpur, Federal Territory of Kuala Lumpur, Malaysia</div>
<div class="t" id="t_locl" style="left:232px;top:649.88px;font-size:10px;color:#45bfad;font-weight:400;transform:scaleX(1.0380)">Location</div>
<div class="t" id="t_loc" style="left:232px;top:666.94px;font-size:12px;color:#222;font-weight:400;transform:scaleX(0.9540)">Office 1</div>
<div class="t" id="t_latl" style="left:232px;top:696.88px;font-size:10px;color:#45bfad;font-weight:400;transform:scaleX(1.0536)">Latitude</div>
<div class="t" id="t_lat" style="left:232px;top:713.94px;font-size:12px;color:#222;font-weight:400;transform:scaleX(0.9863)">3.117958</div>
<div class="t" id="t_radl" style="left:642.5px;top:649.88px;font-size:10px;color:#45bfad;font-weight:400;transform:scaleX(0.9712)">Radius (m)</div>
<div class="t" id="t_rad" style="left:643px;top:666.94px;font-size:12px;color:#222;font-weight:400;transform:scaleX(0.9360)">100</div>
<div class="t" id="t_lonl" style="left:642.5px;top:696.88px;font-size:10px;color:#45bfad;font-weight:400;transform:scaleX(1.0356)">Longitude</div>
<div class="t" id="t_lon" style="left:643px;top:713.94px;font-size:12px;color:#222;font-weight:400;transform:scaleX(0.9581)">101.673981</div>
</body></html>
